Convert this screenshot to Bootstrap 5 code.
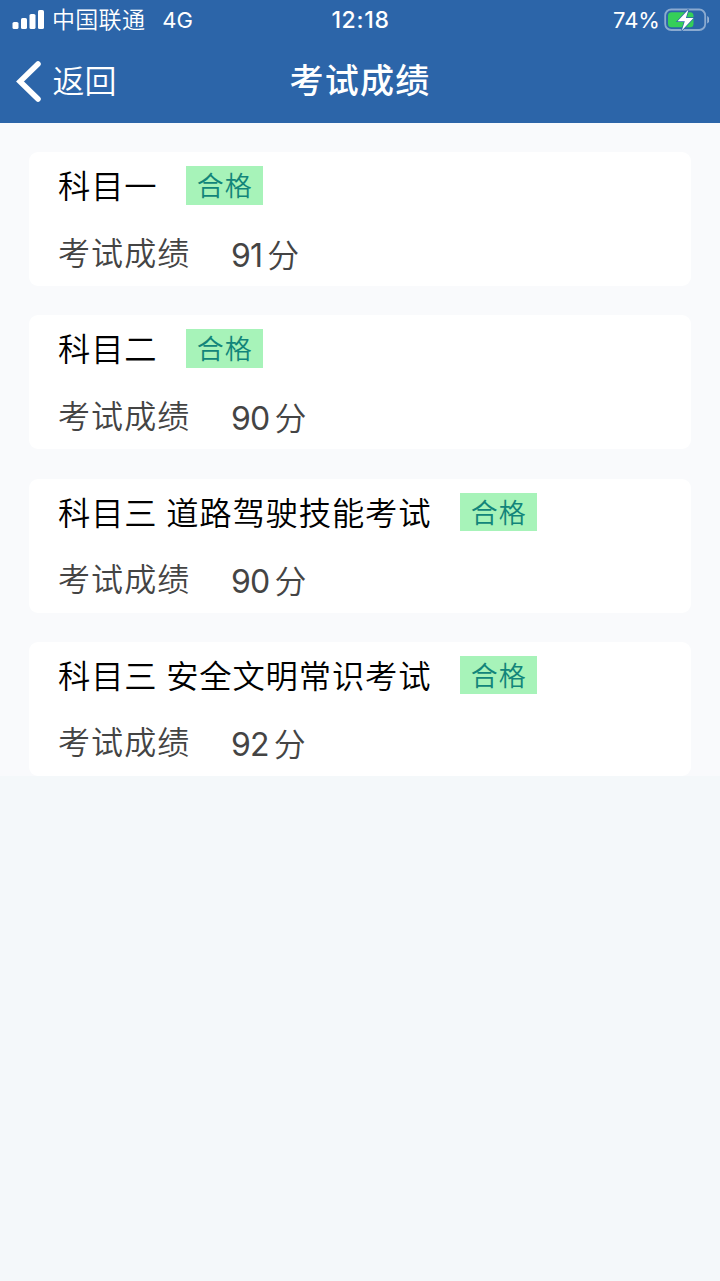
<!DOCTYPE html>
<html lang="zh-CN">
<head>
<meta charset="utf-8">
<meta name="viewport" content="width=device-width, initial-scale=1">
<title>考试成绩</title>
<link rel="stylesheet" href="https://cdn.jsdelivr.net/npm/bootstrap@5.3.0/dist/css/bootstrap.min.css">
<style>
body{font-family:Inter,"Noto Sans CJK SC",sans-serif;background:#f4f8fa;min-height:1281px}
.app-head{background:#2c65a9;height:123px}
.status-bar{height:40px;font-size:22px;line-height:40px;padding-left:12px;padding-right:11px}
.status-bar>div{flex:1 1 0}
.carrier{font-family:"Noto Sans CJK SC DemiLight","Noto Sans CJK SC",sans-serif;font-size:23px;font-weight:350;margin-left:7px;letter-spacing:.3px;line-height:37px;padding-bottom:3px}
.net{margin-left:17px;font-weight:400}
.clock{font-size:23px;letter-spacing:.7px}
.title-bar{height:83px;line-height:83px}
.title-bar>*{flex:1 1 0;min-width:0}
.back{font-size:32px;font-weight:350}
.back svg{margin-left:16px}
.back span{margin-left:10.5px}
.page-title{font-size:34px;font-weight:500;letter-spacing:1.2px;line-height:82px}
.scores{background:#f9fafc;padding:29px 29px 0;gap:29.3px}
.score-card{height:134px;border-radius:9px;padding:14px 29px 0;--bs-card-border-width:0}
.subject{font-size:32.3px;font-weight:350;letter-spacing:.85px;line-height:41px;height:38px;color:#000;word-spacing:-1.2px}
.pass{background:#a7f3b9;color:#12857a;font-size:27px;font-weight:350;line-height:41px;height:38.5px;width:77px;letter-spacing:1px;margin-left:28.9px}
.result{font-size:32px;font-weight:350;line-height:40px;margin-top:29px;color:#444}
.result .name{letter-spacing:1.1px;width:173px}
.result .value{padding-top:2px;gap:5px}
.num{font-weight:400;letter-spacing:-.8px}
</style>
</head>
<body>
<header class="app-head text-white">
  <div class="status-bar d-flex">
    <div class="d-flex align-items-center">
      <svg width="33" height="22" viewBox="0 0 33 22" fill="#fff"><rect x=".5" y="13" width="6" height="7" rx="1.6"/><rect x="9" y="9" width="6" height="11" rx="1.6"/><rect x="17.5" y="5" width="6" height="15" rx="1.6"/><rect x="26" y="1" width="6" height="19" rx="1.6"/></svg>
      <span class="carrier">中国联通</span><span class="net">4G</span>
    </div>
    <div class="text-center fw-medium clock">12:18</div>
    <div class="d-flex align-items-center justify-content-end">
      <span>74%</span>
      <svg width="49" height="24" viewBox="-4 0 49 24"><rect x="1.2" y="1.5" width="40" height="20.5" rx="6" fill="none" stroke="#fff" stroke-opacity=".45" stroke-width="1.8"/><path d="M43.2 8v7.500c3-1.300 3-6.200 0-7.500z" fill="#fff" fill-opacity=".5"/><rect x="4" y="4.200" width="25.500" height="15" rx="3.500" fill="#35cf59"/><path d="M24.500 1.500 13.500 13.200h7.300L17.800 22.500 29.500 10h-7.600z" fill="#fff" stroke="#2c65a9" stroke-width="1.400" paint-order="stroke"/></svg>
    </div>
  </div>
  <nav class="title-bar d-flex">
    <div class="back d-flex align-items-center"><svg width="26" height="42" viewBox="0 0 26 42"><path d="M22 3 4 20.500l18 17.500" fill="none" stroke="#fff" stroke-width="5.5" stroke-linecap="round" stroke-linejoin="miter"/></svg><span>返回</span></div>
    <h1 class="page-title text-center m-0">考试成绩</h1>
    <div></div>
  </nav>
</header>
<main class="scores d-flex flex-column">
  <section class="card score-card">
    <div class="d-flex"><h2 class="subject m-0">科目一</h2><span class="pass text-center">合格</span></div>
    <div class="result d-flex"><span class="name">考试成绩</span><span class="value d-flex"><span class="num">91</span><span>分</span></span></div>
  </section>
  <section class="card score-card">
    <div class="d-flex"><h2 class="subject m-0">科目二</h2><span class="pass text-center">合格</span></div>
    <div class="result d-flex"><span class="name">考试成绩</span><span class="value d-flex"><span class="num">90</span><span>分</span></span></div>
  </section>
  <section class="card score-card">
    <div class="d-flex"><h2 class="subject m-0">科目三 道路驾驶技能考试</h2><span class="pass text-center">合格</span></div>
    <div class="result d-flex"><span class="name">考试成绩</span><span class="value d-flex"><span class="num">90</span><span>分</span></span></div>
  </section>
  <section class="card score-card">
    <div class="d-flex"><h2 class="subject m-0">科目三 安全文明常识考试</h2><span class="pass text-center">合格</span></div>
    <div class="result d-flex"><span class="name">考试成绩</span><span class="value d-flex"><span class="num">92</span><span>分</span></span></div>
  </section>
</main>
<script src="https://cdn.jsdelivr.net/npm/bootstrap@5.3.0/dist/js/bootstrap.bundle.min.js"></script>
</body>
</html>
